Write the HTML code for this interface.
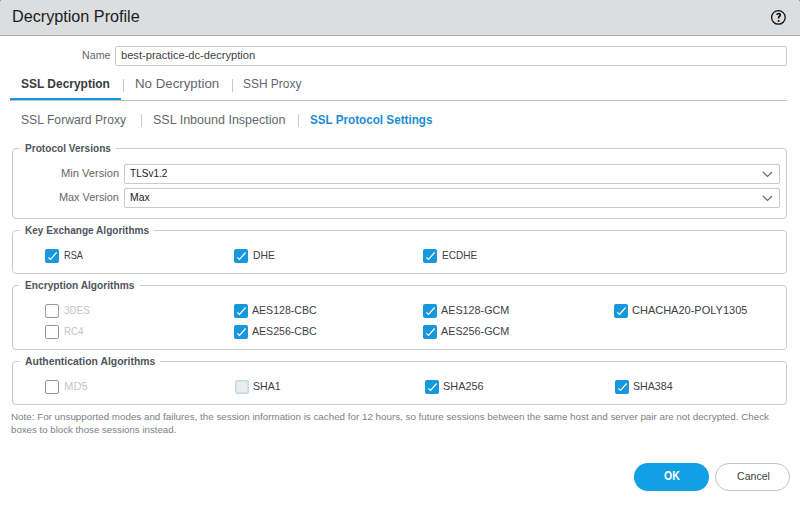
<!DOCTYPE html>
<html><head><meta charset="utf-8"><style>
html,body{margin:0;padding:0;width:800px;height:505px;overflow:hidden;background:#fff;font-family:"Liberation Sans", sans-serif;}
.t{position:absolute;white-space:pre;line-height:1;transform-origin:0 0;}
.hdr{position:absolute;left:0;top:0;width:800px;height:35px;background:#dcdddf;border-bottom:1px solid #a8aaad;}
.help{position:absolute;left:771px;top:10px;width:15px;height:15px;box-sizing:border-box;border:1.5px solid #151515;border-radius:50%;}
.inp{position:absolute;border:1px solid #c9cbcd;border-radius:2px;background:#fff;box-sizing:border-box;}
.fs{position:absolute;left:12px;width:775px;border:1px solid #c9cbcd;border-radius:4px;box-sizing:border-box;}
.lgap{position:absolute;height:1px;background:#fff;}
.cb{position:absolute;width:14px;height:14px;box-sizing:border-box;border-radius:2px;}
.cb.on{background:#1898dc;}
.cb.off{border:1px solid #969a9e;background:#fff;}
.cb.dis{border:1px solid #b8e0f4;background:#ececec;box-shadow:inset 0 0 0 1px #dedede;}
.sep{position:absolute;width:1px;background:#c5cace;}
.chev{position:absolute;}
.btn{position:absolute;top:463px;height:28px;border-radius:14px;box-sizing:border-box;}
</style></head><body>
<div class="hdr"></div>
<div style="position:absolute;left:0;top:0;width:1px;height:1px;background:#8f9092"></div>
<div style="position:absolute;left:799px;top:0;width:1px;height:1px;background:#8f9092"></div>
<svg style="position:absolute;left:770px;top:9px" width="18" height="18" viewBox="0 0 18 18"><circle cx="8.4" cy="8.4" r="6.8" fill="none" stroke="#111" stroke-width="1.3"/><path d="M7.1 6.1 C7.1 5.0 7.9 4.5 8.8 4.5 C9.7 4.5 10.3 5.1 10.3 5.9 C10.3 6.7 9.7 7.1 9.2 7.4 C8.8 7.7 8.7 8.0 8.7 8.6 V9.6" fill="none" stroke="#111" stroke-width="1.7"/><circle cx="8.6" cy="12.0" r="1.05" fill="#111"/></svg>
<div class="inp" style="left:115px;top:46px;width:672px;height:20px;"></div>
<div style="position:absolute;left:10px;top:100px;width:777px;height:1px;background:#c2c2c2;"></div>
<div style="position:absolute;left:10px;top:98px;width:111px;height:2px;background:#1198e0;"></div>
<div class="sep" style="left:123px;top:79px;height:13px;"></div>
<div class="sep" style="left:232px;top:79px;height:13px;"></div>
<div class="sep" style="left:141px;top:114px;height:13px;"></div>
<div class="sep" style="left:298px;top:114px;height:13px;"></div>
<div class='fs' style='top:148px;height:71px'></div><div class='lgap' style='top:148px;left:19px;width:97px'></div>
<div class='fs' style='top:230px;height:44px'></div><div class='lgap' style='top:230px;left:19px;width:135px'></div>
<div class='fs' style='top:285px;height:65px'></div><div class='lgap' style='top:285px;left:19px;width:121px'></div>
<div class='fs' style='top:361px;height:44px'></div><div class='lgap' style='top:361px;left:19px;width:141px'></div>
<div class="inp" style="left:124px;top:164px;width:656px;height:20px;"></div>
<div class="inp" style="left:124px;top:188px;width:656px;height:20px;"></div>
<div class="chev" style="left:762px;top:171px;"><svg width='11' height='7' viewBox='0 0 11 7' style='display:block'><path d='M1 1 L5.5 5.5 L10 1' fill='none' stroke='#65696d' stroke-width='1.15'/></svg></div>
<div class="chev" style="left:762px;top:195px;"><svg width='11' height='7' viewBox='0 0 11 7' style='display:block'><path d='M1 1 L5.5 5.5 L10 1' fill='none' stroke='#65696d' stroke-width='1.15'/></svg></div>
<div class='cb on' style='left:45px;top:249px'><svg width='14' height='14' viewBox='0 0 14 14' style='display:block'><path d='M3.3 8.3 L5.5 10.4 L11.6 3.5' fill='none' stroke='#fff' stroke-width='1.15'/></svg></div>
<div class='cb on' style='left:234px;top:249px'><svg width='14' height='14' viewBox='0 0 14 14' style='display:block'><path d='M3.3 8.3 L5.5 10.4 L11.6 3.5' fill='none' stroke='#fff' stroke-width='1.15'/></svg></div>
<div class='cb on' style='left:423px;top:249px'><svg width='14' height='14' viewBox='0 0 14 14' style='display:block'><path d='M3.3 8.3 L5.5 10.4 L11.6 3.5' fill='none' stroke='#fff' stroke-width='1.15'/></svg></div>
<div class='cb off' style='left:45px;top:304px'></div>
<div class='cb on' style='left:234px;top:304px'><svg width='14' height='14' viewBox='0 0 14 14' style='display:block'><path d='M3.3 8.3 L5.5 10.4 L11.6 3.5' fill='none' stroke='#fff' stroke-width='1.15'/></svg></div>
<div class='cb on' style='left:423px;top:304px'><svg width='14' height='14' viewBox='0 0 14 14' style='display:block'><path d='M3.3 8.3 L5.5 10.4 L11.6 3.5' fill='none' stroke='#fff' stroke-width='1.15'/></svg></div>
<div class='cb on' style='left:614px;top:304px'><svg width='14' height='14' viewBox='0 0 14 14' style='display:block'><path d='M3.3 8.3 L5.5 10.4 L11.6 3.5' fill='none' stroke='#fff' stroke-width='1.15'/></svg></div>
<div class='cb off' style='left:45px;top:325px'></div>
<div class='cb on' style='left:234px;top:325px'><svg width='14' height='14' viewBox='0 0 14 14' style='display:block'><path d='M3.3 8.3 L5.5 10.4 L11.6 3.5' fill='none' stroke='#fff' stroke-width='1.15'/></svg></div>
<div class='cb on' style='left:423px;top:325px'><svg width='14' height='14' viewBox='0 0 14 14' style='display:block'><path d='M3.3 8.3 L5.5 10.4 L11.6 3.5' fill='none' stroke='#fff' stroke-width='1.15'/></svg></div>
<div class='cb off' style='left:45px;top:380px'></div>
<div class='cb dis' style='left:235px;top:380px'></div>
<div class='cb on' style='left:425px;top:380px'><svg width='14' height='14' viewBox='0 0 14 14' style='display:block'><path d='M3.3 8.3 L5.5 10.4 L11.6 3.5' fill='none' stroke='#fff' stroke-width='1.15'/></svg></div>
<div class='cb on' style='left:615px;top:380px'><svg width='14' height='14' viewBox='0 0 14 14' style='display:block'><path d='M3.3 8.3 L5.5 10.4 L11.6 3.5' fill='none' stroke='#fff' stroke-width='1.15'/></svg></div>
<div class="btn" style="left:634px;width:75px;background:#10a0e3;"></div>
<div class="btn" style="left:715px;width:75px;border:1px solid #c2c2c2;background:#fff;"></div>
<div class='t' style='left:12.19px;top:9.00px;font-size:16px;font-weight:400;color:#1b1b1b;transform:scaleX(1.0114)'>Decryption Profile</div>
<div class='t' style='left:81.80px;top:50.00px;font-size:11.5px;font-weight:400;color:#666;transform:scaleX(0.9280)'>Name</div>
<div class='t' style='left:120.80px;top:50.00px;font-size:11.5px;font-weight:400;color:#3d4145;transform:scaleX(0.9667)'>best-practice-dc-decryption</div>
<div class='t' style='left:21.20px;top:77.00px;font-size:13.5px;font-weight:700;color:#383c40;transform:scaleX(0.8856)'>SSL Decryption</div>
<div class='t' style='left:134.52px;top:77.00px;font-size:13.5px;font-weight:400;color:#62676c;transform:scaleX(0.9842)'>No Decryption</div>
<div class='t' style='left:243.40px;top:77.00px;font-size:13.5px;font-weight:400;color:#62676c;transform:scaleX(0.8843)'>SSH Proxy</div>
<div class='t' style='left:21.25px;top:113.00px;font-size:13.5px;font-weight:400;color:#62676c;transform:scaleX(0.9016)'>SSL Forward Proxy</div>
<div class='t' style='left:152.50px;top:113.00px;font-size:13.5px;font-weight:400;color:#62676c;transform:scaleX(0.9275)'>SSL Inbound Inspection</div>
<div class='t' style='left:310.00px;top:113.00px;font-size:13.5px;font-weight:700;color:#1b8dd6;transform:scaleX(0.8651)'>SSL Protocol Settings</div>
<div class='t' style='left:24.90px;top:143.00px;font-size:11.5px;font-weight:700;color:#4f555c;transform:scaleX(0.8790)'>Protocol Versions</div>
<div class='t' style='left:61.00px;top:168.00px;font-size:11.5px;font-weight:400;color:#666;transform:scaleX(0.9667)'>Min Version</div>
<div class='t' style='left:59.20px;top:192.00px;font-size:11.5px;font-weight:400;color:#666;transform:scaleX(0.9462)'>Max Version</div>
<div class='t' style='left:130.00px;top:168.00px;font-size:11.5px;font-weight:400;color:#222;transform:scaleX(0.8743)'>TLSv1.2</div>
<div class='t' style='left:130.00px;top:192.00px;font-size:11.5px;font-weight:400;color:#222;transform:scaleX(0.9010)'>Max</div>
<div class='t' style='left:24.75px;top:225.00px;font-size:11.5px;font-weight:700;color:#4f555c;transform:scaleX(0.8736)'>Key Exchange Algorithms</div>
<div class='t' style='left:24.60px;top:280.00px;font-size:11.5px;font-weight:700;color:#4f555c;transform:scaleX(0.8854)'>Encryption Algorithms</div>
<div class='t' style='left:24.60px;top:356.00px;font-size:11.5px;font-weight:700;color:#4f555c;transform:scaleX(0.9056)'>Authentication Algorithms</div>
<div class='t' style='left:63.80px;top:250.00px;font-size:11.5px;font-weight:400;color:#3d4145;transform:scaleX(0.8050)'>RSA</div>
<div class='t' style='left:252.80px;top:250.00px;font-size:11.5px;font-weight:400;color:#3d4145;transform:scaleX(0.9021)'>DHE</div>
<div class='t' style='left:441.80px;top:250.00px;font-size:11.5px;font-weight:400;color:#3d4145;transform:scaleX(0.8722)'>ECDHE</div>
<div class='t' style='left:63.50px;top:305.00px;font-size:11.5px;font-weight:400;color:#c4c6c8;transform:scaleX(0.8660)'>3DES</div>
<div class='t' style='left:252.20px;top:305.00px;font-size:11.5px;font-weight:400;color:#3d4145;transform:scaleX(0.9185)'>AES128-CBC</div>
<div class='t' style='left:441.20px;top:305.00px;font-size:11.5px;font-weight:400;color:#3d4145;transform:scaleX(0.9380)'>AES128-GCM</div>
<div class='t' style='left:632.20px;top:305.00px;font-size:11.5px;font-weight:400;color:#3d4145;transform:scaleX(0.9568)'>CHACHA20-POLY1305</div>
<div class='t' style='left:63.50px;top:326.00px;font-size:11.5px;font-weight:400;color:#c4c6c8;transform:scaleX(0.8471)'>RC4</div>
<div class='t' style='left:252.20px;top:326.00px;font-size:11.5px;font-weight:400;color:#3d4145;transform:scaleX(0.9185)'>AES256-CBC</div>
<div class='t' style='left:441.20px;top:326.00px;font-size:11.5px;font-weight:400;color:#3d4145;transform:scaleX(0.9380)'>AES256-GCM</div>
<div class='t' style='left:63.80px;top:381.00px;font-size:11.5px;font-weight:400;color:#c4c6c8;transform:scaleX(0.9797)'>MD5</div>
<div class='t' style='left:253.20px;top:381.00px;font-size:11.5px;font-weight:400;color:#3d4145;transform:scaleX(0.9209)'>SHA1</div>
<div class='t' style='left:443.20px;top:381.00px;font-size:11.5px;font-weight:400;color:#3d4145;transform:scaleX(0.9496)'>SHA256</div>
<div class='t' style='left:633.30px;top:381.00px;font-size:11.5px;font-weight:400;color:#3d4145;transform:scaleX(0.9232)'>SHA384</div>
<div class='t' style='left:10.90px;top:412.00px;font-size:9.85px;font-weight:400;color:#7b8085;transform:scaleX(0.9959)'>Note: For unsupported modes and failures, the session information is cached for 12 hours, so future sessions between the same host and server pair are not decrypted. Check</div>
<div class='t' style='left:10.90px;top:425.00px;font-size:9.85px;font-weight:400;color:#7b8085;transform:scaleX(0.9841)'>boxes to block those sessions instead.</div>
<div class='t' style='left:663.90px;top:470.00px;font-size:12px;font-weight:700;color:#fff;transform:scaleX(0.8727)'>OK</div>
<div class='t' style='left:736.60px;top:471.00px;font-size:11.5px;font-weight:400;color:#3d4145;transform:scaleX(0.9194)'>Cancel</div>
</body></html>
